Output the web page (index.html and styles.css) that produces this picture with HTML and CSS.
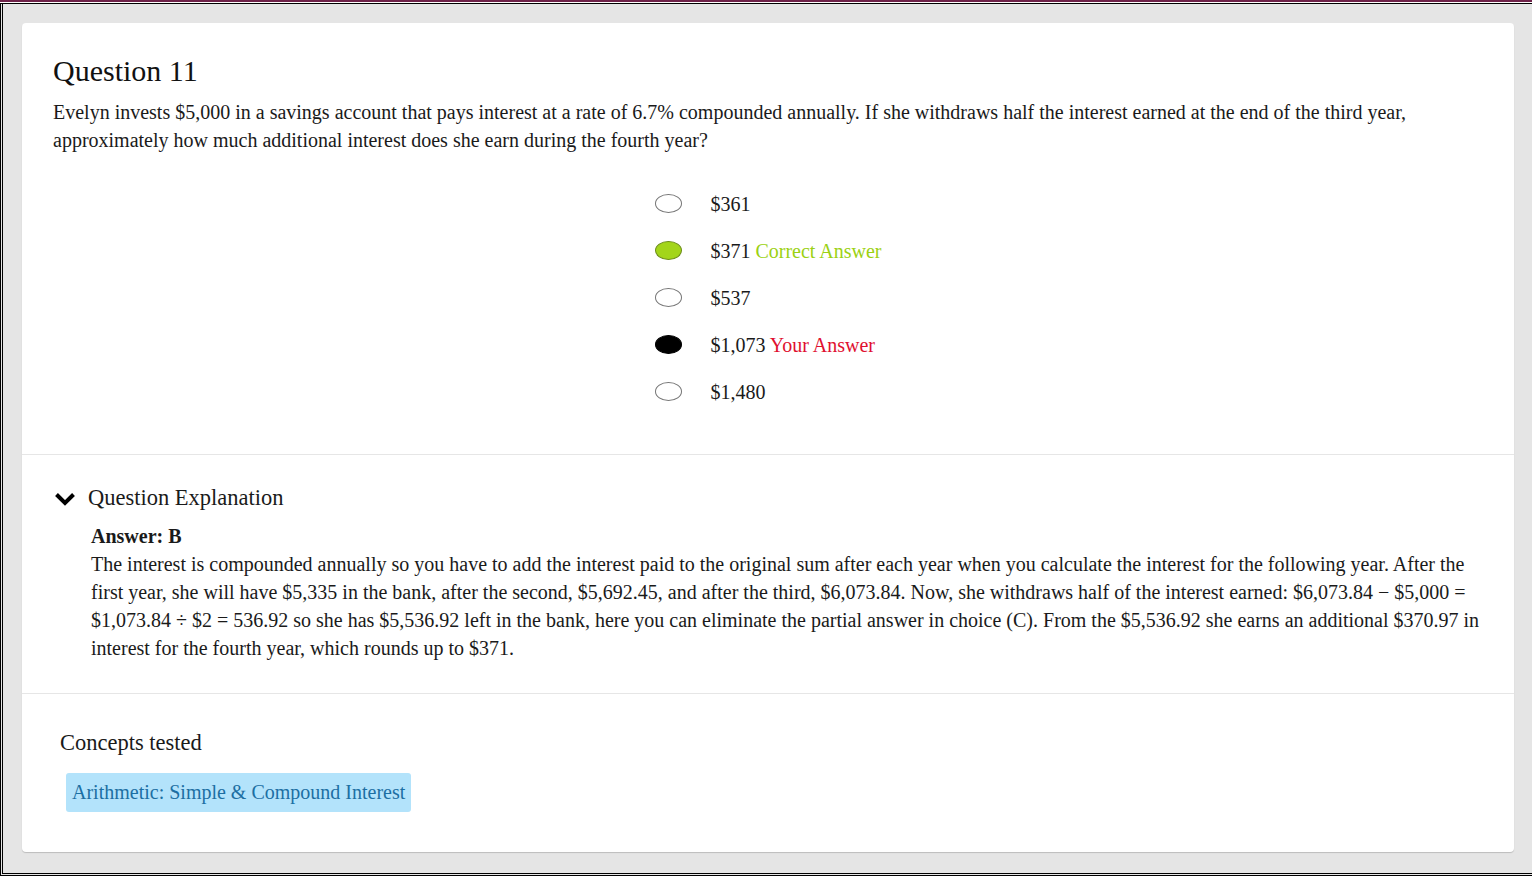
FILE: index.html
```html
<!DOCTYPE html>
<html lang="en">
<head>
<meta charset="utf-8">
<title>Question 11</title>
<link rel="stylesheet" href="styles.css">
</head>
<body>
<div class="window">
  <div class="frame">
    <div class="card">
      <section class="question">
        <h1 class="q-title">Question 11</h1>
        <p class="q-text">Evelyn invests $5,000 in a savings account that pays interest at a rate of 6.7% compounded annually. If she withdraws half the interest earned at the end of the third year, approximately how much additional interest does she earn during the fourth year?</p>
        <ul class="options">
          <li class="option"><span class="radio"></span><span class="opt-text">$361</span></li>
          <li class="option"><span class="radio radio-correct"></span><span class="opt-text">$371 <span class="tag-correct">Correct Answer</span></span></li>
          <li class="option"><span class="radio"></span><span class="opt-text">$537</span></li>
          <li class="option"><span class="radio radio-chosen"></span><span class="opt-text">$1,073 <span class="tag-yours">Your Answer</span></span></li>
          <li class="option"><span class="radio"></span><span class="opt-text">$1,480</span></li>
        </ul>
      </section>
      <section class="explanation">
        <div class="exp-head">
          <svg class="chevron" width="22" height="14" viewBox="0 0 22 14"><polyline points="2.5,2.5 11,11 19.5,2.5" fill="none" stroke="#000" stroke-width="4" stroke-linecap="butt" stroke-linejoin="miter"/></svg>
          <span class="exp-title">Question Explanation</span>
        </div>
        <div class="exp-body">
          <div class="answer">Answer: B</div>
          <p class="exp-text">The interest is compounded annually so you have to add the interest paid to the original sum after each year when you calculate the interest for the following year. After the first year, she will have $5,335 in the bank, after the second, $5,692.45, and after the third, $6,073.84. Now, she withdraws half of the interest earned: $6,073.84 − $5,000 = $1,073.84 ÷ $2 = 536.92 so she has $5,536.92 left in the bank, here you can eliminate the partial answer in choice (C). From the $5,536.92 she earns an additional $370.97 in interest for the fourth year, which rounds up to $371.</p>
        </div>
      </section>
      <section class="concepts">
        <div class="concepts-title">Concepts tested</div>
        <span class="concept-tag">Arithmetic: Simple &amp; Compound Interest</span>
      </section>
    </div>
  </div>
</div>
</body>
</html>
```

FILE: styles.css
```css
html, body {
  margin: 0;
  padding: 0;
  height: 100%;
  background: #e5e5e5;
  font-family: "Liberation Serif", "Times New Roman", serif;
  color: #1a1a1a;
}

.window {
  height: 876px;
  box-sizing: border-box;
  border-top: 2px solid #6f2249;
  padding-top: 1px;
  background: #fff;
}

.frame {
  height: 873px;
  box-sizing: border-box;
  border-top: 1px solid #000;
  border-left: 3px double #000;
  border-bottom: 3px double #000;
  background: #e5e5e5;
  padding: 19px 18px 18px 19px;
}

.card {
  background: #fff;
  border-radius: 4px;
  box-shadow: 0 1px 1px rgba(0, 0, 0, 0.18);
  height: 829px;
  box-sizing: border-box;
}

.question {
  padding: 31px 30px 38px 31px;
  border-bottom: 1px solid #e6e6e6;
}

.q-title {
  margin: 0 0 11px;
  font-weight: normal;
  font-size: 30px;
  line-height: 33px;
  color: #111;
}

.q-text {
  margin: 0;
  font-size: 20px;
  line-height: 28px;
}

.options {
  list-style: none;
  margin: 27px auto 0;
  padding: 0;
  width: fit-content;
}

.option {
  display: flex;
  align-items: center;
  height: 47px;
  font-size: 20px;
}

.radio {
  width: 25px;
  height: 17px;
  border: 1px solid #767676;
  border-radius: 50%;
  background: #fff;
  margin-right: 28px;
  flex: none;
  position: relative;
  top: -1px;
}

.radio-correct {
  background: #a3d51a;
  border-color: #6d8d1a;
}

.radio-chosen {
  background: #000;
  border-color: #000;
}

.tag-correct {
  color: #9bd112;
}

.tag-yours {
  color: #e0102f;
}

.explanation {
  padding: 29px 30px 31px 31px;
  border-bottom: 1px solid #e6e6e6;
}

.exp-head {
  display: flex;
  align-items: center;
  height: 28px;
}

.chevron {
  margin-left: 1px;
  margin-right: 12px;
  position: relative;
  top: 1px;
}

.exp-title {
  font-size: 22.5px;
  line-height: 28px;
}

.exp-body {
  padding-left: 38px;
  margin-top: 10px;
}

.answer {
  font-weight: bold;
  font-size: 20px;
  line-height: 28px;
}

.exp-text {
  margin: 0;
  font-size: 20px;
  line-height: 28px;
}

.concepts {
  padding: 35px 30px 0 38px;
}

.concepts-title {
  font-size: 22.5px;
  line-height: 28px;
  margin-bottom: 16px;
}

.concept-tag {
  display: inline-block;
  margin-left: 6px;
  background: #b3e3fb;
  color: #1c6fa3;
  font-size: 20px;
  line-height: 27px;
  padding: 6px 6px;
  border-radius: 3px;
}
```
